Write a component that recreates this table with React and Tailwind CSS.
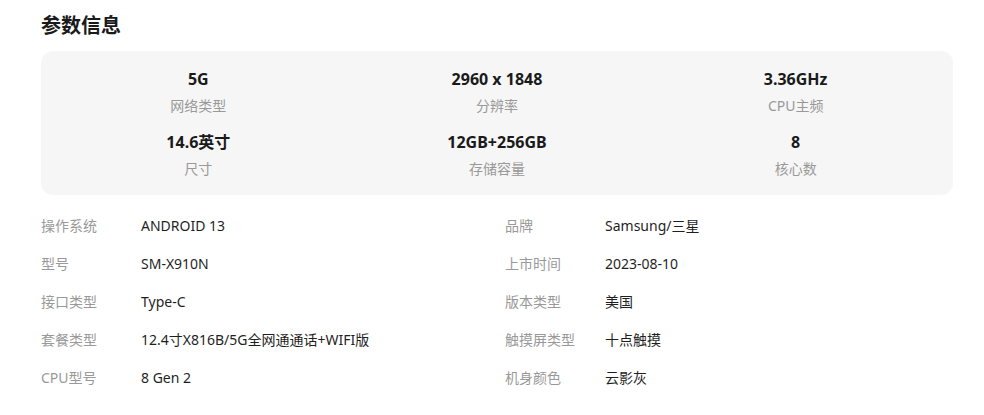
import React from 'react';

const highlights = [
  { value: '5G', label: '网络类型' },
  { value: '2960 x 1848', label: '分辨率' },
  { value: '3.36GHz', label: 'CPU主频' },
  { value: '14.6英寸', label: '尺寸' },
  { value: '12GB+256GB', label: '存储容量' },
  { value: '8', label: '核心数' },
];

const specs = [
  ['操作系统', 'ANDROID 13'],
  ['品牌', 'Samsung/三星'],
  ['型号', 'SM-X910N'],
  ['上市时间', '2023-08-10'],
  ['接口类型', 'Type-C'],
  ['版本类型', '美国'],
  ['套餐类型', '12.4寸X816B/5G全网通通话+WIFI版'],
  ['触摸屏类型', '十点触摸'],
  ['CPU型号', '8 Gen 2'],
  ['机身颜色', '云影灰'],
];

export default function App() {
  return (
    <div className="min-h-screen bg-white px-[41px] pt-[12px] font-['Noto_Sans','Noto_Sans_CJK_SC',sans-serif]">
      <div className="w-[912px]">
        {/* Title */}
        <h2 className="text-[20px] font-bold leading-[28px] text-[#1a1a1a]">参数信息</h2>

        {/* Highlight panel */}
        <div className="mt-[11px] grid grid-cols-3 gap-y-[13px] rounded-[12px] bg-[#f6f6f6] px-2 pt-[16px] pb-[15px]">
          {highlights.map(h => (
            <div key={h.label} className="flex flex-col items-center">
              <div className="text-[16px] font-bold leading-[24px] text-[#1a1a1a]">{h.value}</div>
              <div className="mt-[4px] text-[14px] leading-[22px] text-[#999]">{h.label}</div>
            </div>
          ))}
        </div>

        {/* Spec list */}
        <div className="mt-[11px] grid grid-cols-2 gap-x-4">
          {specs.map(([k, v]) => (
            <div key={k} className="flex h-[38px] items-center text-[14px]">
              <span className="w-[100px] shrink-0 text-[#999]">{k}</span>
              <span className="text-[#1f1f1f]">{v}</span>
            </div>
          ))}
        </div>
      </div>
    </div>
  );
}
